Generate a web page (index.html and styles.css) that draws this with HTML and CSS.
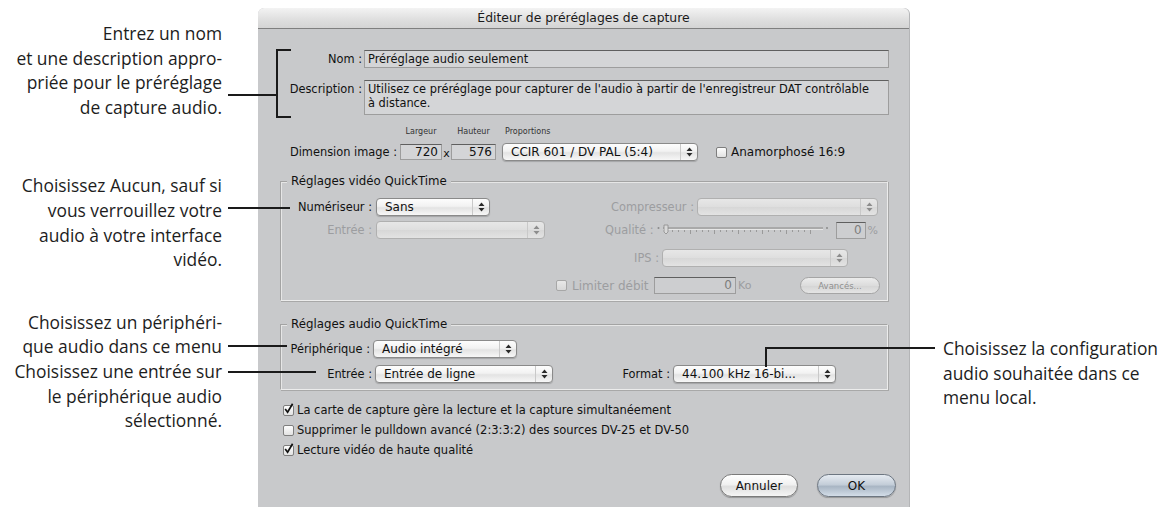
FILE: index.html
```html
<!DOCTYPE html>
<html lang="fr">
<head>
  <meta charset="UTF-8" />
  <title>Éditeur de préréglages de capture</title>
  <link rel="stylesheet" href="styles.css">
</head>
<body>

<div class="page">

  <!-- Left callouts -->
  <div class="notes notes-left">
    <p class="note n1">Entrez un nom<br>et une description appro-<br>priée pour le préréglage<br>de capture audio.</p>
    <p class="note n2">Choisissez Aucun, sauf si<br>vous verrouillez votre<br>audio à votre interface<br>vidéo.</p>
    <p class="note n3">Choisissez un périphéri-<br>que audio dans ce menu</p>
    <p class="note">Choisissez une entrée sur<br>le périphérique audio<br>sélectionné.</p>
  </div>

  <!-- Dialog -->
  <div class="dialog">
    <div class="titlebar">Éditeur de préréglages de capture</div>
    <div class="dlg-body">

      <div class="row row-nom">
        <span class="lbl lbl-main">Nom :</span>
        <div class="field field-wide">Préréglage audio seulement</div>
      </div>

      <div class="row row-desc">
        <span class="lbl lbl-main">Description :</span>
        <div class="field field-wide field-area">Utilisez ce préréglage pour capturer de l'audio à partir de l'enregistreur DAT contrôlable à distance.</div>
      </div>

      <div class="captions">
        <span class="cap cap-w">Largeur</span>
        <span class="cap cap-x"></span>
        <span class="cap cap-h">Hauteur</span>
        <span class="cap cap-p">Proportions</span>
      </div>
      <div class="row row-dim">
        <span class="lbl lbl-dim">Dimension image :</span>
        <div class="field num num-w">720</div>
        <span class="times">x</span>
        <div class="field num num-h">576</div>
        <div class="popup pop-prop">
          <span class="val">CCIR 601 / DV PAL (5:4)</span>
          <span class="arrows"><svg width="7" height="10" viewBox="0 0 7 10"><path d="M0.5 4 L3.5 0.5 L6.5 4 Z M0.5 6 L3.5 9.5 L6.5 6 Z" fill="#2a2a2a"/></svg></span>
        </div>
        <span class="check"></span>
        <span class="chk-text">Anamorphosé 16:9</span>
      </div>

      <!-- Video group -->
      <div class="group group-video">
        <div class="group-title">Réglages vidéo QuickTime</div>

        <div class="grow grow-a">
          <span class="lbl glbl">Numériseur :</span>
          <div class="popup pop-sans">
            <span class="val">Sans</span>
            <span class="arrows"><svg width="7" height="10" viewBox="0 0 7 10"><path d="M0.5 4 L3.5 0.5 L6.5 4 Z M0.5 6 L3.5 9.5 L6.5 6 Z" fill="#2a2a2a"/></svg></span>
          </div>
          <span class="lbl off flex-lbl">Compresseur :</span>
          <div class="popup disabled pop-comp">
            <span class="val"></span>
            <span class="arrows"><svg width="7" height="10" viewBox="0 0 7 10"><path d="M0.5 4 L3.5 0.5 L6.5 4 Z M0.5 6 L3.5 9.5 L6.5 6 Z" fill="#8d8d8d"/></svg></span>
          </div>
        </div>

        <div class="grow grow-b">
          <span class="lbl glbl off">Entrée :</span>
          <div class="popup disabled pop-vin">
            <span class="val"></span>
            <span class="arrows"><svg width="7" height="10" viewBox="0 0 7 10"><path d="M0.5 4 L3.5 0.5 L6.5 4 Z M0.5 6 L3.5 9.5 L6.5 6 Z" fill="#8d8d8d"/></svg></span>
          </div>
          <span class="lbl off flex-lbl">Qualité :</span>
          <svg class="slider" width="172" height="14" viewBox="0 0 172 14">
            <circle cx="1.5" cy="5" r="1" fill="#8a8a8a"/>
            <rect x="6" y="4" width="160" height="2" fill="#a9a9a9"/>
            <rect x="6" y="6" width="160" height="1" fill="#e6e6e6"/>
            <g fill="#9a9a9a">
              <rect x="9" y="7" width="1" height="4"/><rect x="15" y="7" width="1" height="2"/><rect x="21" y="7" width="1" height="2"/><rect x="27" y="7" width="1" height="2"/>
              <rect x="33" y="7" width="1" height="4"/><rect x="39" y="7" width="1" height="2"/><rect x="45" y="7" width="1" height="2"/><rect x="51" y="7" width="1" height="2"/>
              <rect x="57" y="7" width="1" height="4"/><rect x="63" y="7" width="1" height="2"/><rect x="69" y="7" width="1" height="2"/><rect x="75" y="7" width="1" height="2"/>
              <rect x="81" y="7" width="1" height="4"/><rect x="87" y="7" width="1" height="2"/><rect x="93" y="7" width="1" height="2"/><rect x="99" y="7" width="1" height="2"/>
              <rect x="105" y="7" width="1" height="4"/><rect x="111" y="7" width="1" height="2"/><rect x="117" y="7" width="1" height="2"/><rect x="123" y="7" width="1" height="2"/>
              <rect x="129" y="7" width="1" height="4"/><rect x="135" y="7" width="1" height="2"/><rect x="141" y="7" width="1" height="2"/><rect x="147" y="7" width="1" height="2"/>
              <rect x="153" y="7" width="1" height="4"/>
            </g>
            <path d="M7 2 L11 2 L11 9 L9 11 L7 9 Z" fill="#d9d9d9" stroke="#8c8c8c" stroke-width="0.8"/>
            <circle cx="170" cy="5" r="1" fill="#8a8a8a"/>
          </svg>
          <div class="field num num-q">0</div>
          <span class="unit off">%</span>
        </div>

        <div class="grow grow-c">
          <span class="lbl off">IPS :</span>
          <div class="popup disabled pop-ips">
            <span class="val"></span>
            <span class="arrows"><svg width="7" height="10" viewBox="0 0 7 10"><path d="M0.5 4 L3.5 0.5 L6.5 4 Z M0.5 6 L3.5 9.5 L6.5 6 Z" fill="#8d8d8d"/></svg></span>
          </div>
        </div>

        <div class="grow grow-d">
          <span class="check off-check"></span>
          <span class="chk-text off lim-text">Limiter débit</span>
          <div class="field num num-ko">0</div>
          <span class="unit off">Ko</span>
          <span class="btn btn-small">Avancés...</span>
        </div>
      </div>

      <!-- Audio group -->
      <div class="group group-audio">
        <div class="group-title">Réglages audio QuickTime</div>

        <div class="grow grow-p">
          <span class="lbl glbl-p">Périphérique :</span>
          <div class="popup pop-dev">
            <span class="val">Audio intégré</span>
            <span class="arrows"><svg width="7" height="10" viewBox="0 0 7 10"><path d="M0.5 4 L3.5 0.5 L6.5 4 Z M0.5 6 L3.5 9.5 L6.5 6 Z" fill="#2a2a2a"/></svg></span>
          </div>
        </div>

        <div class="grow grow-e">
          <span class="lbl glbl">Entrée :</span>
          <div class="popup pop-ain">
            <span class="val">Entrée de ligne</span>
            <span class="arrows"><svg width="7" height="10" viewBox="0 0 7 10"><path d="M0.5 4 L3.5 0.5 L6.5 4 Z M0.5 6 L3.5 9.5 L6.5 6 Z" fill="#2a2a2a"/></svg></span>
          </div>
          <span class="lbl flex-lbl">Format :</span>
          <div class="popup pop-fmt">
            <span class="val">44.100 kHz 16-bi...</span>
            <span class="arrows"><svg width="7" height="10" viewBox="0 0 7 10"><path d="M0.5 4 L3.5 0.5 L6.5 4 Z M0.5 6 L3.5 9.5 L6.5 6 Z" fill="#2a2a2a"/></svg></span>
          </div>
        </div>
      </div>

      <div class="opts">
        <div class="opt"><span class="check on"><svg width="11" height="12" viewBox="0 0 11 12"><path d="M2.2 6 L4.6 9.2 L9.6 0.8" fill="none" stroke="#111" stroke-width="1.7"/></svg></span>La carte de capture gère la lecture et la capture simultanéement</div>
        <div class="opt"><span class="check"></span>Supprimer le pulldown avancé (2:3:3:2) des sources DV-25 et DV-50</div>
        <div class="opt"><span class="check on"><svg width="11" height="12" viewBox="0 0 11 12"><path d="M2.2 6 L4.6 9.2 L9.6 0.8" fill="none" stroke="#111" stroke-width="1.7"/></svg></span>Lecture vidéo de haute qualité</div>
      </div>

      <div class="buttons">
        <span class="btn">Annuler</span>
        <span class="btn btn-default">OK</span>
      </div>

    </div>
  </div>

  <!-- Right callout -->
  <div class="notes notes-right">
    <p class="note">Choisissez la configuration<br>audio souhaitée dans ce<br>menu local.</p>
  </div>

  <!-- Leader lines -->
  <div class="ln" style="left:228px; top:94px; width:50px; height:2px;"></div>
  <div class="ln" style="left:276px; top:49px; width:2px; height:69px;"></div>
  <div class="ln" style="left:276px; top:49px; width:15px; height:2px;"></div>
  <div class="ln" style="left:276px; top:116px; width:15px; height:2px;"></div>
  <div class="ln" style="left:228px; top:207px; width:62px; height:2px;"></div>
  <div class="ln" style="left:228px; top:345px; width:59px; height:2px;"></div>
  <div class="ln" style="left:228px; top:371px; width:88px; height:2px;"></div>
  <div class="ln" style="left:765px; top:347px; width:170px; height:2px;"></div>
  <div class="ln" style="left:765px; top:347px; width:2px; height:20px;"></div>

</div>

</body>
</html>
```

FILE: styles.css
```css
body {
  margin: 0;
  background: #fff;
  font-family: "DejaVu Sans", sans-serif;
}

.page {
  position: relative;
  width: 1173px;
  height: 512px;
  display: flex;
  align-items: flex-start;
}

/* Callouts */
.notes {
  font-family: "Open Sans", Lato, sans-serif;
  font-size: 17.4px;
  line-height: 24.6px;
  color: #1d1d1d;
}

.notes-left {
  width: 222px;
  padding-right: 36px;
  padding-top: 21px;
  text-align: right;
  white-space: nowrap;
}

.notes-right {
  padding-left: 34px;
  padding-top: 336px;
  white-space: nowrap;
}

.note { margin: 0; }
.n2 { margin-top: 54px; }
.n3 { margin-top: 38px; }

.ln {
  position: absolute;
  background: #1a1a1a;
}

/* Dialog */
.dialog {
  width: 651px;
  flex-shrink: 0;
  margin-top: 8px;
  background: #c8c9cb;
  border-radius: 6px 6px 0 0;
  box-shadow: 1px 0 0 #b4b5b7;
  font-size: 11.4px;
  color: #111;
}

.titlebar {
  height: 20px;
  line-height: 20px;
  text-align: center;
  font-size: 12.4px;
  color: #1a1a1a;
  background: linear-gradient(#f3f3f3, #dedede 60%, #d4d4d4);
  border-bottom: 1px solid #7f7f7f;
  border-radius: 6px 6px 0 0;
}

.dlg-body {
  padding: 21px 0 10px;
}

.row {
  display: flex;
  align-items: center;
}

.lbl {
  text-align: right;
  white-space: nowrap;
}

.lbl-main { width: 104px; margin-right: 2px; }
.row-desc { margin-top: 12px; align-items: flex-start; }
.row-desc .lbl { padding-top: 2px; }

.field {
  box-sizing: border-box;
  background: #d4d5d7;
  border: 1px solid #9d9d9d;
  border-top-color: #5f5f5f;
  padding: 1px 3px;
  white-space: nowrap;
}

.field-wide { width: 525px; height: 18px; line-height: 14px; }
.field-area { height: 35px; white-space: normal; line-height: 14px; padding-right: 14px; }

.captions {
  display: flex;
  margin-top: 11px;
  height: 16px;
  font-size: 8px;
  line-height: 12px;
  color: #333;
}

.cap-w { margin-left: 142px; width: 42px; text-align: center; }
.cap-x { width: 9px; }
.cap-h { width: 45px; text-align: center; }
.cap-p { margin-left: 9px; }

.row-dim { height: 20px; }
.lbl-dim { width: 139px; margin-right: 3px; }

.num {
  height: 16px;
  line-height: 13px;
  text-align: right;
  padding: 1px 3px;
  font-size: 12px;
}

.num-w { width: 42px; }
.num-h { width: 45px; }
.times { width: 9px; text-align: center; font-size: 11px; padding-top: 3px; }

/* Popups */
.popup {
  box-sizing: border-box;
  height: 18px;
  display: flex;
  align-items: center;
  border: 1px solid #8a8a8a;
  border-radius: 4px;
  background: linear-gradient(#fdfdfd, #f2f2f2 45%, #e3e3e3 55%, #f7f7f7);
  box-shadow: 0 1px 1px rgba(0,0,0,0.18);
  font-size: 12px;
}

.popup .val {
  flex: 1;
  padding-left: 8px;
  white-space: nowrap;
  overflow: hidden;
}

.popup .arrows {
  width: 16px;
  height: 100%;
  display: flex;
  align-items: center;
  justify-content: center;
  border-left: 1px solid #c9c9c9;
}

.popup.disabled {
  border-color: #b0b0b0;
  background: linear-gradient(#e7e7e7, #dedede 50%, #d7d7d7 51%, #e3e3e3);
  box-shadow: none;
}

.pop-prop { width: 196px; margin-left: 6px; }

/* Checkboxes */
.check {
  box-sizing: border-box;
  width: 11px;
  height: 11px;
  border: 1px solid #7e7e7e;
  border-radius: 2px;
  background: linear-gradient(#fdfdfd, #e2e2e2);
  position: relative;
  flex-shrink: 0;
}

.check svg {
  position: absolute;
  left: -1px;
  top: -3px;
}

.row-dim .check { margin-left: 18px; margin-right: 4px; }
.chk-text { white-space: nowrap; font-size: 12px; }

/* Groups */
.group {
  margin: 0 21px 0 22px;
  border: 1px solid #a3a3a3;
  border-right-color: #ececec;
  border-bottom-color: #ececec;
  box-shadow: inset 1px 1px 0 #e6e6e6, 1px 1px 0 #a8a8a8;
}

.group-title {
  width: fit-content;
  margin: -8px 0 0 6px;
  padding: 0 4px;
  background: #c8c9cb;
  line-height: 14px;
  font-size: 11.8px;
}

.group-video { margin-top: 19px; padding-bottom: 6px; }
.group-audio { margin-top: 23px; padding-bottom: 6px; }

.grow {
  display: flex;
  align-items: center;
  height: 18px;
}

.off { color: #9c9da0; }
.flex-lbl { flex: 1; margin-right: 3px; }

.glbl { width: 91px; margin-right: 4px; }
.glbl-p { width: 89px; margin-right: 3px; }

.grow-a { margin-top: 10px; padding-right: 9px; }
.grow-b { margin-top: 5px; padding-right: 9px; }
.grow-c { margin-top: 10px; justify-content: flex-end; padding-right: 39px; }
.grow-c .lbl { margin-right: 3px; }
.grow-d { margin-top: 10px; padding-left: 275px; padding-right: 7px; height: 17px; }

.pop-sans { width: 114px; }
.pop-comp { width: 181px; }
.pop-vin { width: 169px; }
.pop-ips { width: 186px; }

.slider { margin-right: 7px; }
.num-q { width: 30px; height: 17px; background: #cdced0; color: #7d7d7d; }
.unit { margin-left: 2px; font-size: 11px; }

.off-check { border-color: #a7a7a7; background: linear-gradient(#e8e8e8, #d8d8d8); }
.lim-text { width: 82px; margin-left: 5px; }
.num-ko { width: 82px; height: 17px; background: #cdced0; color: #7d7d7d; }

.grow-p { margin-top: 9px; }
.grow-e { margin-top: 7px; padding-right: 51px; }
.grow-e .glbl { margin-right: 3px; }

.pop-dev { width: 144px; }
.pop-ain { width: 178px; }
.pop-fmt { width: 163px; }

/* Options */
.opts {
  margin-top: 10px;
  padding-left: 25px;
}

.opt {
  display: flex;
  align-items: center;
  height: 20px;
  font-size: 11.5px;
}

.opt .check { margin-right: 3px; }

/* Buttons */
.buttons {
  display: flex;
  justify-content: flex-end;
  gap: 19px;
  margin-top: 14px;
  padding-right: 13px;
}

.btn {
  box-sizing: border-box;
  display: flex;
  align-items: center;
  justify-content: center;
  width: 78px;
  height: 23px;
  border: 1px solid #7a7a7a;
  border-radius: 12px;
  background: linear-gradient(#ffffff, #f1f1f1 45%, #dfdfdf 55%, #f5f5f5);
  box-shadow: 0 1px 1px rgba(0,0,0,0.25);
  font-size: 12px;
}

.btn-default {
  width: 79px;
  background: linear-gradient(#e6ebf1, #c4ced9 45%, #a9b6c4 55%, #d3dde8);
  border-color: #6d7681;
}

.btn-small {
  margin-left: auto;
  width: 80px;
  height: 17px;
  font-size: 8.5px;
  color: #8f8f8f;
  border-color: #a5a5a5;
  background: linear-gradient(#ececec, #dcdcdc 50%, #d4d4d4 51%, #e4e4e4);
  box-shadow: none;
}
```
